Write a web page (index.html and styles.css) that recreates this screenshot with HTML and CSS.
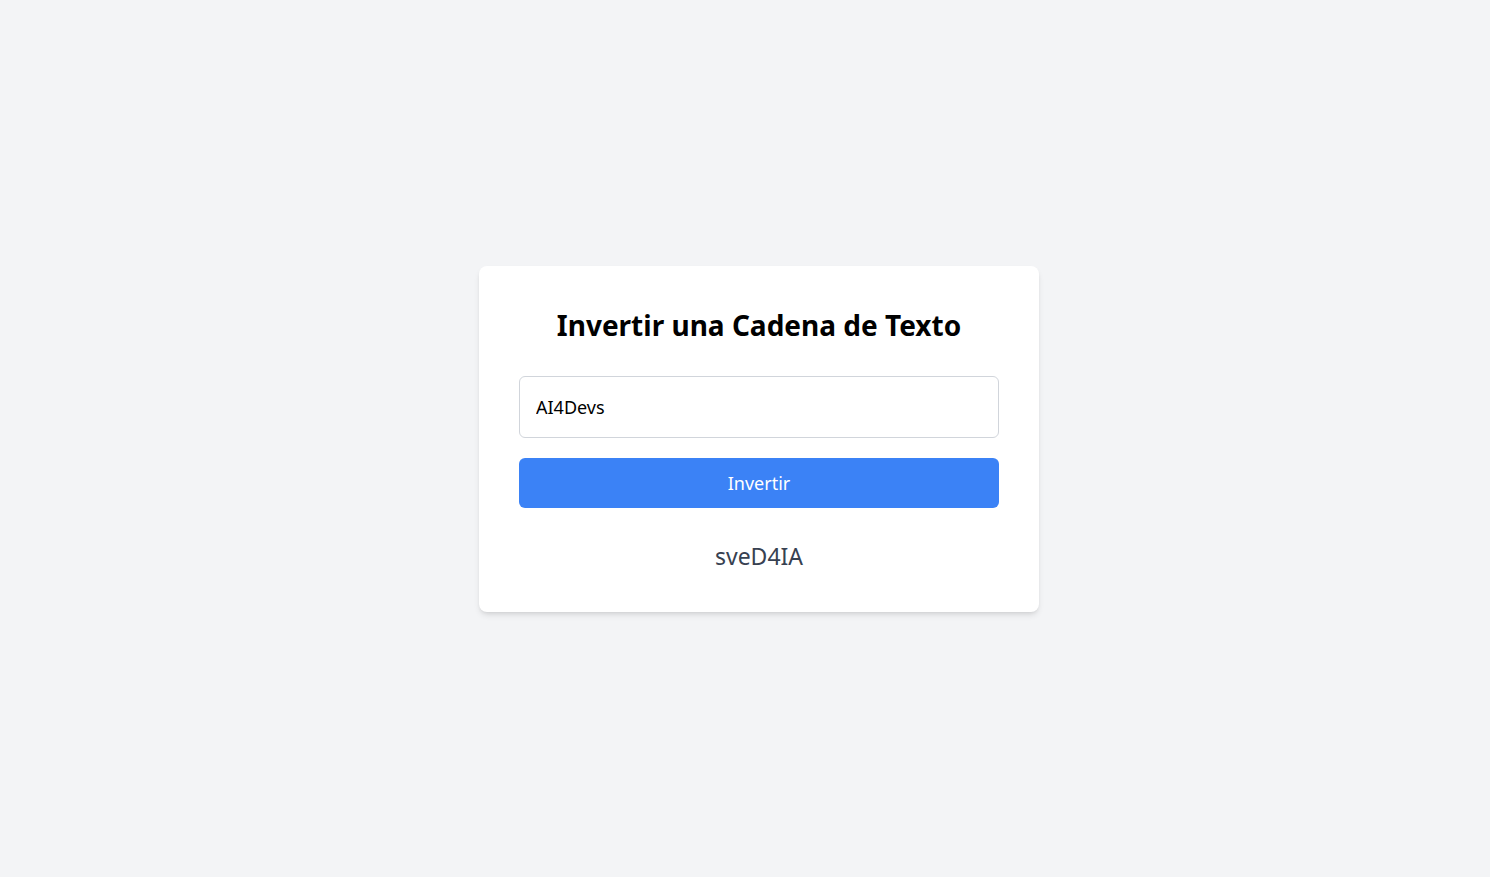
FILE: index.html
```html
<!DOCTYPE html>
<html lang="es">
<head>
<meta charset="utf-8">
<title>Invertir una Cadena de Texto</title>
<link rel="stylesheet" href="styles.css">
</head>
<body>
<main class="page">
  <section class="card">
    <h1 class="title">Invertir una Cadena de Texto</h1>
    <input class="field" type="text" value="AI4Devs">
    <button class="btn" type="button">Invertir</button>
    <p class="result">sveD4IA</p>
  </section>
</main>
</body>
</html>
```
FILE: styles.css
```css
* { box-sizing: border-box; }
html, body { margin: 0; padding: 0; }
body {
  background: #f3f4f6;
  font-family: "Noto Sans", "Open Sans", sans-serif;
  color: #111827;
}
.page {
  min-height: 877px;
  padding-left: 28px;
  display: flex;
  align-items: center;
  justify-content: center;
}
.card {
  width: 560px;
  background: #ffffff;
  border-radius: 8px;
  padding: 40px;
  box-shadow: 0 4px 6px -1px rgba(0,0,0,0.1), 0 2px 4px -2px rgba(0,0,0,0.1);
  display: flex;
  flex-direction: column;
}
.title {
  margin: 0 0 32px;
  font-size: 28px;
  line-height: 38px;
  font-weight: 700;
  text-align: center;
  color: #000;
}
.field {
  width: 100%;
  height: 62px;
  padding: 0 16px;
  border: 1px solid #d1d5db;
  border-radius: 6px;
  font-family: inherit;
  font-size: 18px;
  color: #000;
  background: #fff;
  outline: none;
}
.btn {
  margin-top: 20px;
  width: 100%;
  height: 50px;
  border: 0;
  border-radius: 6px;
  background: #3b82f6;
  color: #fff;
  font-family: inherit;
  font-size: 18px;
  cursor: pointer;
}
.result {
  margin: 32px 0 0;
  font-size: 23px;
  line-height: 32px;
  text-align: center;
  color: #374151;
}
```
